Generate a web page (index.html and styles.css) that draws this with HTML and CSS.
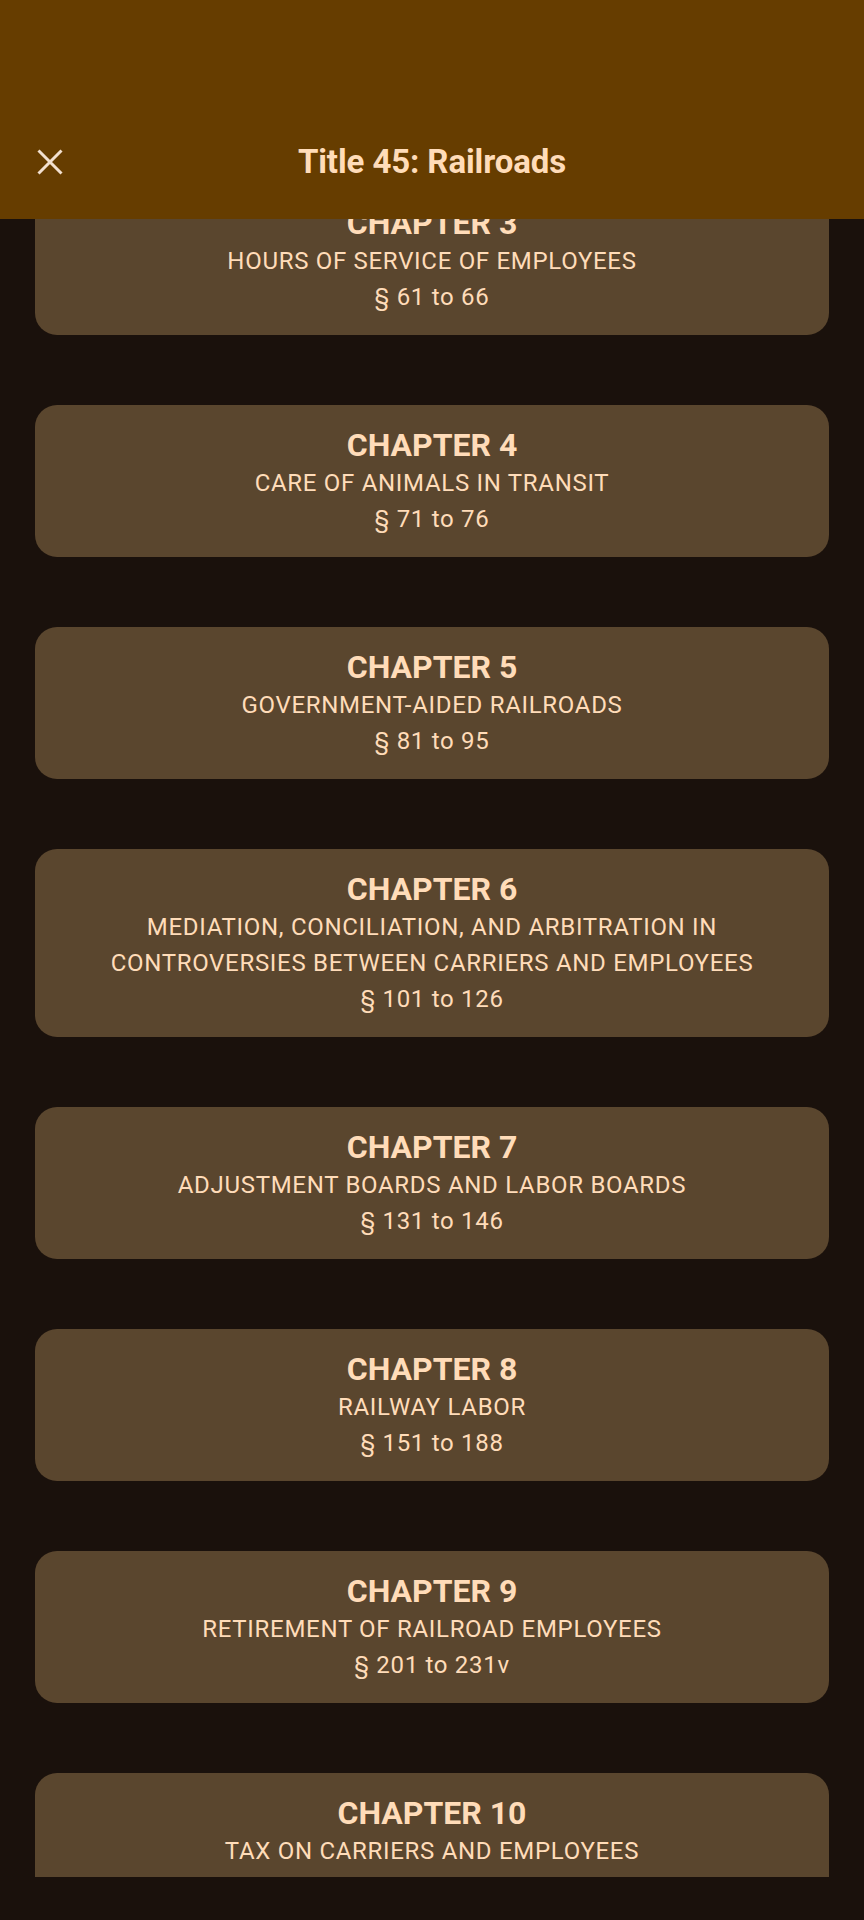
FILE: index.html
```html
<!DOCTYPE html>
<html>
<head>
<meta charset="utf-8">
<link rel="stylesheet" href="styles.css">
</head>
<body>
<div class="app">
  <header class="topbar">
    <div class="bar-row">
      <button class="close" aria-label="Close">
        <svg width="26" height="26" viewBox="0 0 26 26"><path d="M1.5 1.5 L24.5 24.5 M24.5 1.5 L1.5 24.5" stroke="#f2e0cf" stroke-width="3" fill="none"/></svg>
      </button>
      <h1 class="title">Title 45: Railroads</h1>
    </div>
  </header>
  <main class="viewport">
    <ul class="list">
      <li class="card"><div class="ch">CHAPTER 3</div><div class="desc">HOURS OF SERVICE OF EMPLOYEES</div><div class="range">§ 61 to 66</div></li>
      <li class="card"><div class="ch">CHAPTER 4</div><div class="desc">CARE OF ANIMALS IN TRANSIT</div><div class="range">§ 71 to 76</div></li>
      <li class="card"><div class="ch">CHAPTER 5</div><div class="desc">GOVERNMENT-AIDED RAILROADS</div><div class="range">§ 81 to 95</div></li>
      <li class="card"><div class="ch">CHAPTER 6</div><div class="desc">MEDIATION, CONCILIATION, AND ARBITRATION IN CONTROVERSIES BETWEEN CARRIERS AND EMPLOYEES</div><div class="range">§ 101 to 126</div></li>
      <li class="card"><div class="ch">CHAPTER 7</div><div class="desc">ADJUSTMENT BOARDS AND LABOR BOARDS</div><div class="range">§ 131 to 146</div></li>
      <li class="card"><div class="ch">CHAPTER 8</div><div class="desc">RAILWAY LABOR</div><div class="range">§ 151 to 188</div></li>
      <li class="card"><div class="ch">CHAPTER 9</div><div class="desc">RETIREMENT OF RAILROAD EMPLOYEES</div><div class="range">§ 201 to 231v</div></li>
      <li class="card"><div class="ch">CHAPTER 10</div><div class="desc">TAX ON CARRIERS AND EMPLOYEES</div><div class="range">§ 3201 to 3241</div></li>
    </ul>
  </main>
</div>
</body>
</html>
```
FILE: styles.css
```css
* { box-sizing: border-box; }
html, body {
  margin: 0;
  padding: 0;
  background: #1a110c;
}
body {
  font-family: Roboto, "Noto Sans", "Liberation Sans", sans-serif;
  color: #ffdcb9;
  width: 864px;
  height: 1920px;
  overflow: hidden;
}
.app {
  display: flex;
  flex-direction: column;
  height: 1920px;
}
.topbar {
  height: 219px;
  background: #663d00;
  display: flex;
  flex-direction: column;
  justify-content: flex-end;
  flex: none;
}
.bar-row {
  height: 114px;
  position: relative;
  display: flex;
  align-items: center;
  justify-content: center;
}
.close {
  position: absolute;
  left: 37px;
  top: 44px;
  width: 26px;
  height: 26px;
  padding: 0;
  border: 0;
  background: none;
  display: flex;
}
.title {
  margin: 0;
  font-size: 33px;
  font-weight: 700;
  line-height: 40px;
  color: #ffdcb9;
  letter-spacing: -0.1px;
}
.viewport {
  height: 1658px;
  overflow: hidden;
  flex: none;
}
.list {
  list-style: none;
  margin: -36px 0 0 0;
  padding: 0 35px;
  display: flex;
  flex-direction: column;
  gap: 70px;
}
.card {
  background: #5a462e;
  border-radius: 22px;
  padding: 20px 48px;
  text-align: center;
}
.ch {
  font-size: 32px;
  font-weight: 700;
  line-height: 40px;
}
.desc, .range {
  font-size: 24px;
  line-height: 36px;
  letter-spacing: 0.7px;
}
```
